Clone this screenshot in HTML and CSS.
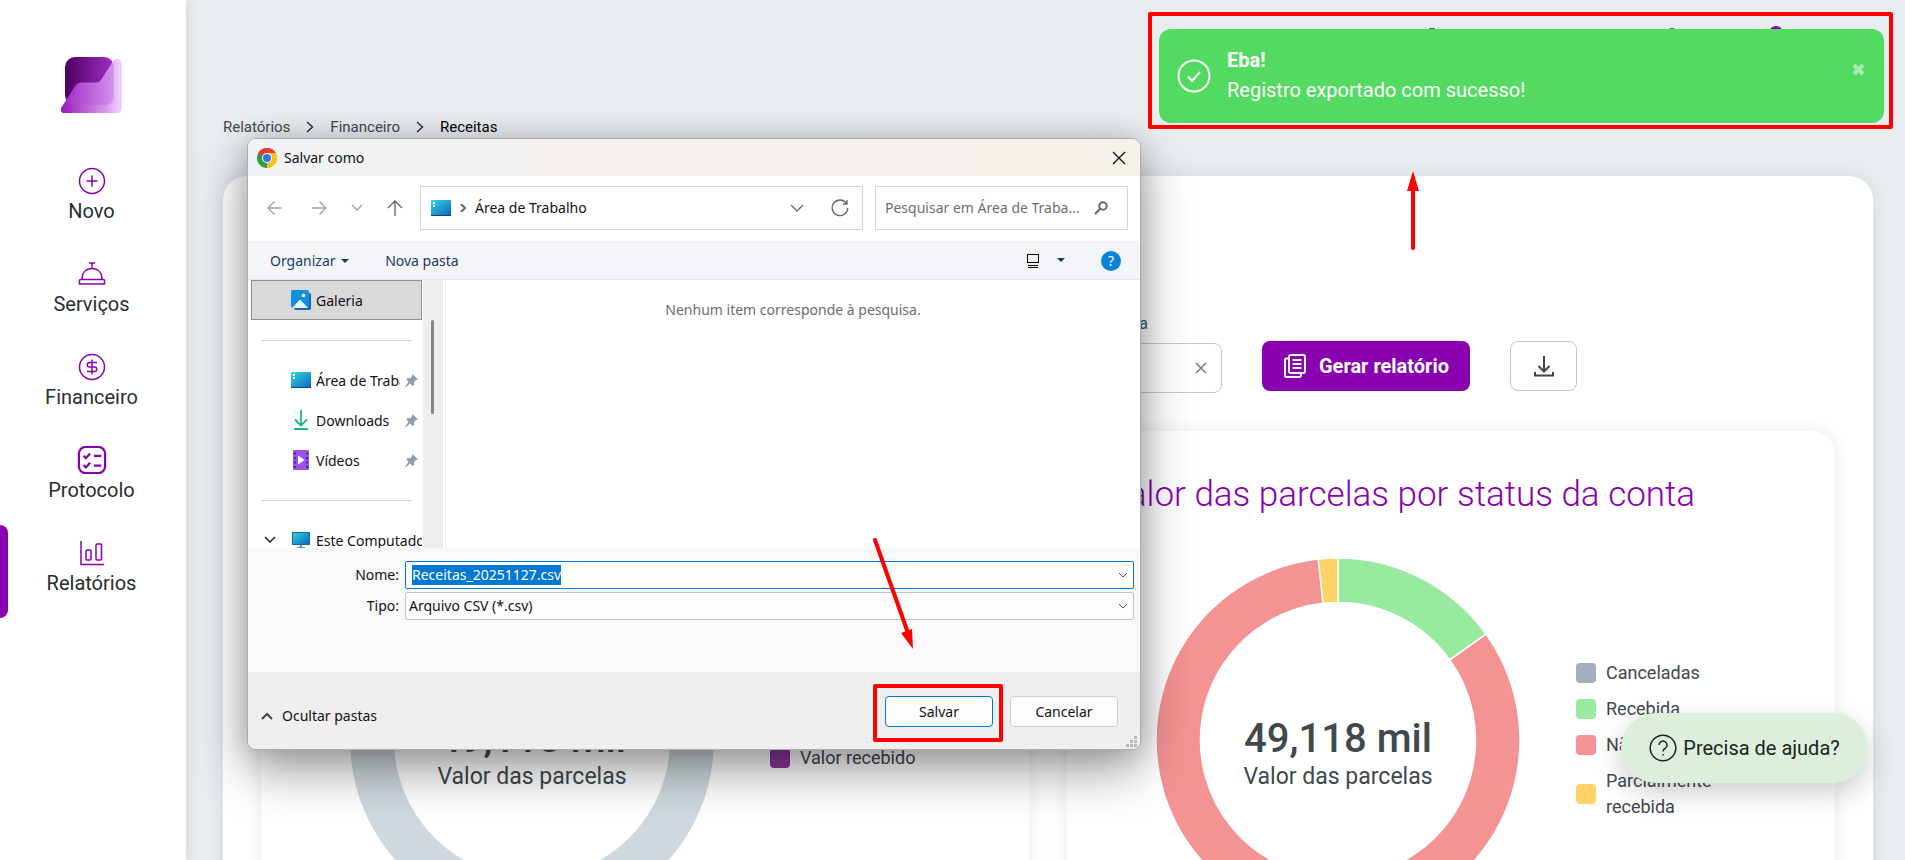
FILE: index.html
```html
<!DOCTYPE html>
<html lang="pt-BR">
<head>
  <meta charset="UTF-8">
  <meta name="viewport" content="width=device-width, initial-scale=1.0">
  <title>Relatórios - Receitas</title>
  <link rel="stylesheet" href="styles.css">
</head>
<body>
  <nav class="sidebar">
    <a href="#" class="logo" aria-label="Início">
      <svg width="62" height="58" viewBox="0 0 62 58">
        <defs>
          <linearGradient id="logoDark" x1="0" x2="1"><stop offset="0" stop-color="#4b0061"/><stop offset="1" stop-color="#a22fc4"/></linearGradient>
          <linearGradient id="logoLight" x1="0" x2="1"><stop offset="0" stop-color="#9a17bd"/><stop offset="0.75" stop-color="#d79ceb"/><stop offset="1" stop-color="#f4d6ff"/></linearGradient>
        </defs>
        <rect x="5" y="1" width="49" height="48" rx="10" fill="url(#logoDark)"/>
        <path d="M4 57Q0 57 1 52L16 29Q18 26 22 26.500H35Q39 27 41 24L52 7Q54 3 57 3Q62 3 62 9V51Q62 57 57 57Z" fill="url(#logoLight)"/>
        <path d="M7 43L16 29Q18 26 22 26.500H35Q39 27 41 24L53 6Q54 8 54 10V40Q54 49 44 49H15Q9 49 7 43Z" fill="#b04bd0" opacity="0.300"/>
      </svg>
    </a>
    <a href="#" class="menu-item">
      <svg class="menu-icon" viewBox="0 0 28 28"><circle cx="14" cy="14" r="12.500"/><path d="M14 8.500v11M8.500 14h11"/></svg>
      <span>Novo</span>
    </a>
    <a href="#" class="menu-item">
      <svg class="menu-icon" viewBox="0 0 28 28"><path d="M11 3h6M14 3v5M4 19.500C4 12 8.500 8.500 14 8.500S24 12 24 19.500M2.500 19.500h23q1 0 1 1V24h-25v-3.500q0-1 1-1z"/></svg>
      <span>Serviços</span>
    </a>
    <a href="#" class="menu-item">
      <svg class="menu-icon" viewBox="0 0 28 28"><circle cx="14" cy="14" r="12.500"/><path d="M14 6.500v15M19 9.500h-7.500a2.250 2.250 0 0 0 0 4.500h5a2.250 2.250 0 0 1 0 4.500H9"/></svg>
      <span>Financeiro</span>
    </a>
    <a href="#" class="menu-item">
      <svg class="menu-icon menu-icon-bold" viewBox="0 0 30 30"><rect x="1" y="1" width="28" height="28" rx="7"/><path d="M6 10.500l2.500 2.500L13 8M6 20.500L8.500 23l4.500-5M17 10.500h8M17 21h8"/></svg>
      <span>Protocolo</span>
    </a>
    <a href="#" class="menu-item active">
      <svg class="menu-icon" viewBox="0 0 28 28"><path d="M3 2v23.500h23"/><rect x="8" y="11" width="5" height="10" rx="1"/><rect x="18" y="5" width="5.500" height="16" rx="1"/></svg>
      <span>Relatórios</span>
    </a>
  </nav>

  <main class="main">
    <div class="breadcrumb">
      <a href="#">Relatórios</a>
      <svg width="8" height="12" viewBox="0 0 8 12"><path d="M1 1l5.500 5L1 11"/></svg>
      <a href="#">Financeiro</a>
      <svg width="8" height="12" viewBox="0 0 8 12"><path d="M1 1l5.500 5L1 11"/></svg>
      <strong>Receitas</strong>
    </div>

    <section class="panel">
      <form class="filters">
        <div class="field">
          <label for="conta">Conta bancária</label>
          <div class="field-box">
            <input type="text" id="conta">
            <button type="button" class="clear-btn" aria-label="Limpar">
              <svg width="12" height="12" viewBox="0 0 12 12"><path d="M1 1l10 10M11 1L1 11"/></svg>
            </button>
          </div>
        </div>
        <button type="button" class="btn btn-primary">
          <svg width="24" height="26" viewBox="0 0 24 26"><rect x="6" y="2" width="16" height="18" rx="2"/><path d="M6 5.500H3.500Q2 5.500 2 7v15.500Q2 24 3.500 24H16q2 0 2-2v-2M9.500 7h9M9.500 11h9M9.500 15h9"/></svg>
          Gerar relatório
        </button>
        <button type="button" class="btn btn-download" aria-label="Baixar">
          <svg width="22" height="24" viewBox="0 0 22 24"><path d="M11 2v15M5.500 12l5.500 5.500 5.500-5.500M2 18v3.500h18V18"/></svg>
        </button>
      </form>

      <div class="cards">
        <article class="card">
          <h2>Valor das parcelas</h2>
          <div class="chart-row">
            <div class="donut">
              <svg viewBox="0 0 364 364"><circle cx="182" cy="182" r="160" fill="none" stroke="#cfd8dd" stroke-width="44"/></svg>
              <div class="donut-center"><b>49,118 mil</b><span>Valor das parcelas</span></div>
            </div>
            <ul class="legend">
              <li><i class="swatch gray"></i>Valor a receber</li>
              <li><i class="swatch purple"></i>Valor recebido</li>
            </ul>
          </div>
        </article>

        <article class="card">
          <h2>Valor das parcelas por status da conta</h2>
          <div class="chart-row">
            <div class="donut">
              <svg viewBox="0 0 364 364">
                <g stroke="#fff" stroke-width="1.500">
                  <path fill="#98eaa0" d="M182 0A182 182 0 0 1 330 76.100L293.800 102A137.500 137.500 0 0 0 182 44.500Z"/>
                  <path fill="#f39393" d="M330 76.100A182 182 0 1 1 162.300 1.100L167.100 45.300A137.500 137.500 0 1 0 293.800 102Z"/>
                  <path fill="#ffd365" d="M162.300 1.100A182 182 0 0 1 182 0V44.500A137.500 137.500 0 0 0 167.100 45.300Z"/>
                </g>
              </svg>
              <div class="donut-center"><b>49,118 mil</b><span>Valor das parcelas</span></div>
            </div>
            <ul class="legend">
              <li><i class="swatch gray"></i>Canceladas</li>
              <li><i class="swatch green"></i>Recebida</li>
              <li><i class="swatch red"></i>Não recebida</li>
              <li><i class="swatch yellow"></i>Parcialmente recebida</li>
            </ul>
          </div>
        </article>
      </div>
    </section>
  </main>

  <button type="button" class="help-btn">
    <svg width="28" height="28" viewBox="0 0 28 28"><circle cx="14" cy="14" r="12.800"/><path d="M10 11a4 4 0 1 1 6 3.500q-2 1-2 3M14 20v1.500"/></svg>
    Precisa de ajuda?
  </button>

  <!-- ícones do topo, atrás do aviso -->
  <div class="top-icons"><i class="bell"></i><i></i><i class="avatar"></i></div>

  <div class="toast" role="status">
    <svg width="34" height="34" viewBox="0 0 34 34"><circle cx="17" cy="17" r="15.500"/><path d="M11 17.500l4 4.500 8-9"/></svg>
    <div class="toast-text">
      <b>Eba!</b>
      <span>Registro exportado com sucesso!</span>
    </div>
    <button type="button" class="toast-close" aria-label="Fechar">
      <svg width="15" height="15" viewBox="0 0 15 15"><path d="M3 3l9 9M12 3l-9 9"/></svg>
    </button>
  </div>

  <!-- Salvar como -->
  <div class="dialog" role="dialog" aria-labelledby="dialogTitle">
    <div class="dialog-title">
      <svg width="20" height="20" viewBox="0 0 20 20">
        <path d="M10 10L1.340 5A10 10 0 0 1 18.660 5Z" fill="#e33b2e"/>
        <path d="M10 10L18.660 5A10 10 0 0 1 10 20Z" fill="#fcc31e"/>
        <path d="M10 10V20A10 10 0 0 1 1.340 5Z" fill="#2b9f4b"/>
        <path d="M10 5h8.660A10 10 0 0 1 10 20l4.330-7.500Z" fill="#fcc31e"/>
        <path d="M1.340 5L5.670 12.500 10 10V5Z" fill="#2b9f4b"/>
        <path d="M1.340 5A10 10 0 0 1 18.660 5H10Q6 5 5.500 10Z" fill="#e33b2e"/>
        <circle cx="10" cy="10" r="5" fill="#fff"/><circle cx="10" cy="10" r="4" fill="#2a79ee"/>
      </svg>
      <span id="dialogTitle">Salvar como</span>
      <button type="button" class="icon-btn close" aria-label="Fechar">
        <svg width="14" height="14" viewBox="0 0 14 14"><path d="M1 1l12 12M13 1L1 13"/></svg>
      </button>
    </div>

    <div class="dialog-nav">
      <div class="nav-arrows">
        <button type="button" class="icon-btn muted back" aria-label="Voltar"><svg width="16" height="16" viewBox="0 0 16 16"><path d="M15 8H1M7.500 1.500L1 8l6.500 6.500"/></svg></button>
        <button type="button" class="icon-btn muted" aria-label="Avançar"><svg width="16" height="16" viewBox="0 0 16 16"><path d="M1 8h14M8.500 1.500L15 8l-6.500 6.500"/></svg></button>
        <button type="button" class="icon-btn muted" aria-label="Recentes"><svg width="12" height="16" viewBox="0 0 12 16"><path d="M1 5l5 5 5-5"/></svg></button>
        <button type="button" class="icon-btn" aria-label="Acima"><svg width="16" height="16" viewBox="0 0 16 16"><path d="M8 16V1M1 8l7-7 7 7"/></svg></button>
      </div>
      <div class="address">
        <svg width="20" height="16" viewBox="0 0 20 16"><use href="#desk"/></svg>
        <svg class="line" width="6" height="8" viewBox="0 0 6 8"><path d="M1 0l4 4-4 4" stroke-width="2"/></svg>
        <span>Área de Trabalho</span>
        <button type="button" class="icon-btn push" aria-label="Abrir"><svg width="14" height="8" viewBox="0 0 14 8"><path d="M1 1l6 6 6-6"/></svg></button>
        <button type="button" class="icon-btn" aria-label="Atualizar"><svg width="18" height="18" viewBox="0 0 18 18"><path d="M15.500 4.500A7.800 7.800 0 1 0 16.800 9M16 1v4h-4"/></svg></button>
      </div>
      <div class="search">
        <input type="text" placeholder="Pesquisar em Área de Traba..." aria-label="Pesquisar">
        <svg class="line" width="14" height="14" viewBox="0 0 14 14"><circle cx="9" cy="5" r="3.700" stroke-width="2"/><path d="M6.500 7.500L1 13" stroke-width="2"/></svg>
      </div>
    </div>

    <div class="dialog-tools">
      <button type="button">Organizar <i class="caret"></i></button>
      <button type="button">Nova pasta</button>
      <button type="button" class="view-btn" aria-label="Exibição">
        <svg width="12" height="14" viewBox="0 0 12 14" fill="none" stroke="#000"><rect x="0.500" y="0.500" width="11" height="8"/><path d="M1 11.500h10M1 13.500h10"/></svg>
        <i class="caret"></i>
      </button>
      <button type="button" class="help-circle">?</button>
    </div>

    <div class="dialog-body">
      <div class="tree">
        <div class="tree-item selected">
          <svg width="20" height="20" viewBox="0 0 20 20"><rect x="3" y="3" width="17" height="17" rx="2" fill="#1467b5"/><rect width="18" height="18" rx="2" fill="#1390dc"/><path d="M1 18L9 9.500l8 8.500Z" fill="#e4f2ff"/><circle cx="12.500" cy="5.500" r="1.800" fill="#fff"/></svg>
          <span>Galeria</span>
        </div>
        <hr>
        <div class="tree-item">
          <svg width="20" height="16" viewBox="0 0 20 16">
            <defs><linearGradient id="blueFill" x1="0" y1="0" x2="1" y2="1"><stop offset="0" stop-color="#36d5e6"/><stop offset="1" stop-color="#0a63bd"/></linearGradient></defs>
            <g id="desk"><rect width="20" height="16" rx="1" fill="url(#blueFill)"/><path d="M0 15h20v1H0z" fill="#0c4475"/><path d="M2 2h2v2H2zM2 5h2v2H2z" fill="#fff"/></g>
          </svg>
          <span>Área de Trabalho</span>
          <svg class="pin" width="13" height="13" viewBox="0 0 13 13"><use href="#pin"/></svg>
        </div>
        <div class="tree-item">
          <svg width="20" height="20" viewBox="0 0 20 20" fill="none" stroke="#1db58f" stroke-width="1.800"><path d="M10 0v15M4 9.500l6 6 6-6M3 19h14"/></svg>
          <span>Downloads</span>
          <svg class="pin" width="13" height="13" viewBox="0 0 13 13"><use href="#pin"/></svg>
        </div>
        <div class="tree-item">
          <svg width="20" height="20" viewBox="0 0 20 20"><rect x="2" width="16" height="20" rx="1" fill="#9a55e8"/><path d="M7 5.500l6.500 4.500L7 14.500Z" fill="#fff"/><path d="M4 2.500v16M16 2.500v16" stroke="#4d2390" stroke-width="2" stroke-dasharray="2 2.500"/></svg>
          <span>Vídeos</span>
          <svg class="pin" width="13" height="13" viewBox="0 0 13 13"><path id="pin" d="M7.500 0L13 5.500 11 6l-2 2 .200 3L7.500 12 5 9.500 1 13l-1-.500L3.500 8 1.500 5.500 2.500 4l3 .200L7 2Z" fill="#929ca3"/></svg>
        </div>
        <hr>
        <div class="tree-item">
          <svg class="expander" width="12" height="8" viewBox="0 0 12 8"><path d="M1 1l5 5 5-5"/></svg>
          <svg width="20" height="18" viewBox="0 0 20 18"><rect x="1.500" y="1.500" width="17" height="12" fill="url(#blueFill)" stroke="#126b9c"/><path d="M10 14v3M6 17h8" stroke="#5d6b75" stroke-width="1.500"/></svg>
          <span>Este Computador</span>
        </div>
      </div>
      <div class="scrollbar"><div class="thumb"></div></div>
      <div class="files">Nenhum item corresponde à pesquisa.</div>
    </div>

    <div class="dialog-fields">
      <label for="fileName">Nome:</label>
      <div class="combo combo-name">
        <input type="text" id="fileName" value="Receitas_20251127.csv" autofocus>
        <svg width="10" height="6" viewBox="0 0 10 6"><path d="M1 1l4 4 4-4"/></svg>
      </div>
      <label for="fileType">Tipo:</label>
      <div class="combo">
        <select id="fileType"><option>Arquivo CSV (*.csv)</option></select>
        <svg width="10" height="6" viewBox="0 0 10 6"><path d="M1 1l4 4 4-4"/></svg>
      </div>
    </div>

    <div class="dialog-footer">
      <button type="button" class="hide-folders">
        <svg width="12" height="8" viewBox="0 0 12 8"><path d="M1 7l5-5 5 5"/></svg>
        Ocultar pastas
      </button>
      <button type="button" class="win-btn default">Salvar</button>
      <button type="button" class="win-btn">Cancelar</button>
      <svg class="grip" width="11" height="11" viewBox="0 0 11 11"><path d="M8 0h3v3H8zM4 4h3v3H4zM8 4h3v3H8zM0 8h3v3H0zM4 8h3v3H4zM8 8h3v3H8z" fill="#b9b9b9"/></svg>
    </div>
  </div>

  <!-- marcações do tutorial -->
  <div class="mark mark-toast"></div>
  <div class="mark mark-save"></div>
  <svg class="arrow arrow-toast" width="16" height="80" viewBox="0 0 16 80"><path d="M8 77V20" stroke="#f00" stroke-width="4" stroke-linecap="round"/><path d="M8 0l6 20H2Z" fill="#f00"/></svg>
  <svg class="arrow arrow-save" width="46" height="114" viewBox="0 0 46 114"><path d="M3 3L36 96" stroke="#f00" stroke-width="4" stroke-linecap="round"/><path d="M41 112L29 96l11-4Z" fill="#f00"/></svg>

  <script>
    document.getElementById('fileName').focus();
    document.getElementById('fileName').select();
  </script>
</body>
</html>
```
FILE: styles.css
```css
:root {
  --primary: #8800b0;
  --bg-color: #e9edf0;
  --text: #3f484d;
  --red: #ff0000;
  --win-blue: #0078d4;
}
* {
  box-sizing: border-box;
}
body {
  font-family: Roboto, sans-serif;
  background: var(--bg-color);
  color: var(--text);
  margin: 0;
  height: 100vh;
  overflow: hidden;
  display: flex;
  position: relative;
}
button, input, select {
  font: inherit;
  color: inherit;
}
button {
  background: none;
  border: none;
  padding: 0;
  cursor: pointer;
}
a {
  color: inherit;
  text-decoration: none;
}
svg {
  flex: none;
}

/* menu lateral */
.sidebar {
  width: 186px;
  flex: none;
  background: #fff;
  box-shadow: 0 0 16px rgba(0, 0, 0, 0.12);
  padding-top: 56px;
}
.logo {
  display: flex;
  justify-content: center;
  height: 97px;
  padding-right: 4px;
}
.menu-item {
  height: 93px;
  padding: 14px 3px 0 0;
  display: flex;
  flex-direction: column;
  align-items: center;
  font-size: 20px;
  line-height: 32px;
  color: #2a2d30;
  position: relative;
}
.menu-icon {
  width: 28px;
  height: 28px;
  fill: none;
  stroke: var(--primary);
  stroke-width: 1.5;
}
.menu-icon-bold {
  width: 30px;
  stroke-width: 2.4;
}
.menu-item.active::before {
  content: "";
  position: absolute;
  left: 0;
  top: 0;
  width: 8px;
  height: 93px;
  background: var(--primary);
  border-radius: 0 8px 8px 0;
}

/* conteúdo */
.main {
  flex: 1;
  min-width: 0;
  padding: 116px 32px 0 37px;
}
.breadcrumb {
  display: flex;
  align-items: center;
  gap: 16px;
  font-size: 15px;
  line-height: 22px;
}
.breadcrumb svg {
  fill: none;
  stroke: #333;
  stroke-width: 1.5;
}
.breadcrumb strong {
  font-weight: 400;
  color: #000;
}
.panel {
  margin-top: 38px;
  background: #fff;
  border-radius: 24px;
  padding: 137px 38px 38px;
  box-shadow: 0 0 24px rgba(0, 0, 0, 0.08);
}
.filters {
  display: flex;
  justify-content: flex-end;
  align-items: flex-end;
  gap: 40px;
  padding-right: 258px;
}
.field {
  width: 182px;
  font-size: 16px;
  color: #3c5a78;
}
.field label {
  display: block;
  line-height: 22px;
  margin-bottom: 8px;
}
.field-box {
  height: 50px;
  border: 1px solid #c0c8d0;
  border-radius: 8px;
  display: flex;
  align-items: center;
  padding-right: 14px;
}
.field-box input {
  flex: 1;
  min-width: 0;
  border: none;
  outline: none;
  background: none;
}
.clear-btn svg {
  display: block;
  fill: none;
  stroke: #6b7a89;
  stroke-width: 1.5;
}
.btn {
  height: 50px;
  margin-bottom: 2px;
  border-radius: 8px;
  display: flex;
  align-items: center;
  justify-content: center;
  gap: 12px;
}
.btn svg {
  fill: none;
  stroke: currentColor;
  stroke-width: 2;
}
.btn-primary {
  width: 208px;
  background: var(--primary);
  color: #fff;
  font-size: 20px;
  font-weight: 700;
}
.btn-download {
  width: 67px;
  border: 1px solid #c0c8d0;
}
.cards {
  display: grid;
  grid-template-columns: 1fr 1fr;
  gap: 38px;
  margin-top: 38px;
}
.card {
  border-radius: 24px;
  background: #fff;
  padding: 40px;
  box-shadow: 0 0 16px rgba(0, 0, 0, 0.09);
}
.card h2 {
  margin: 0 0 39px;
  font-size: 35px;
  font-weight: 300;
  line-height: 48px;
  color: var(--primary);
}
.chart-row {
  display: flex;
  align-items: center;
  gap: 56px;
  padding-left: 49px;
}
.donut {
  width: 364px;
  flex: none;
  display: grid;
}
.donut svg {
  overflow: visible;
}
.donut > * {
  grid-area: 1 / 1;
}
.donut-center {
  display: flex;
  flex-direction: column;
  justify-content: center;
  align-items: center;
  padding-top: 28px;
  font-size: 23px;
  line-height: 30px;
}
.donut-center b {
  font-size: 40px;
  font-weight: 500;
  line-height: 46px;
}
.legend {
  list-style: none;
  margin: 0;
  padding: 0;
  max-width: 160px;
  display: grid;
  gap: 10px;
  font-size: 18px;
  line-height: 26px;
}
.legend li {
  display: flex;
  align-items: center;
  gap: 10px;
}
.swatch {
  width: 20px;
  height: 20px;
  flex: none;
  border-radius: 4px;
}
.gray { background: #a3afbb; }
.purple { background: #8a3a9c; }
.green { background: #98eaa0; }
.red { background: #f39393; }
.yellow { background: #ffd365; }

.help-btn {
  position: absolute;
  right: 37px;
  bottom: 77px;
  width: 247px;
  height: 70px;
  border-radius: 35px;
  background: #dbefdc;
  color: #222;
  font-size: 20px;
  display: flex;
  align-items: center;
  justify-content: center;
  gap: 6px;
  box-shadow: 0 10px 28px rgba(0, 0, 0, 0.2);
}
.help-btn svg {
  fill: none;
  stroke: #222;
  stroke-width: 1.5;
}

/* aviso */
.top-icons {
  position: absolute;
  top: 26px;
  right: 122px;
  display: flex;
  gap: 90px;
}
.top-icons i {
  width: 14px;
  height: 14px;
  margin-top: 2px;
  border-radius: 7px;
  background: #3f6d99;
}
.top-icons .bell {
  width: 6px;
  margin-right: 140px;
  border-radius: 0;
}
.top-icons .avatar {
  margin-top: 0;
  background: var(--primary);
}
.toast {
  position: absolute;
  top: 29px;
  right: 21px;
  width: 725px;
  height: 94px;
  border-radius: 12px;
  background: #53da61;
  color: #fff;
  display: flex;
  align-items: center;
  gap: 16px;
  padding: 0 18px;
}
.toast svg {
  fill: none;
  stroke: #fff;
  stroke-width: 2;
}
.toast-text {
  display: flex;
  flex-direction: column;
  flex: 1;
  padding-bottom: 3px;
  font-size: 20px;
  line-height: 30px;
}
.toast-close {
  padding-bottom: 10px;
  opacity: 0.5;
}
.toast .toast-close svg {
  stroke-width: 4;
}

/* janela Salvar como */
.dialog {
  position: absolute;
  left: 247px;
  top: 138px;
  width: 894px;
  background: #fff;
  border: 1px solid #a9abad;
  border-radius: 9px;
  overflow: hidden;
  box-shadow: 0 20px 50px rgba(0, 0, 0, 0.4), 0 0 24px rgba(0, 0, 0, 0.14);
  font-family: "Noto Sans", "Open Sans", sans-serif;
  font-size: 14px;
  line-height: 20px;
  color: #111;
}
.icon-btn {
  display: flex;
}
.icon-btn svg, .line {
  fill: none;
  stroke: #666;
  stroke-width: 1.3;
}
.icon-btn.muted svg {
  stroke: #a0a0a0;
}
.icon-btn.close svg {
  stroke: #111;
}
.dialog-title {
  height: 37px;
  padding: 0 14px 0 9px;
  display: flex;
  align-items: center;
  gap: 7px;
  background: linear-gradient(90deg, #f1f3f5, #f6f2ee 45%, #f7f1eb);
}
.icon-btn.close {
  margin-left: auto;
}
.dialog-nav {
  height: 65px;
  padding: 0 12px 2px 19px;
  display: flex;
  align-items: center;
  gap: 12px;
}
.nav-arrows {
  display: flex;
  gap: 24px;
  width: 141px;
}
.nav-arrows .back {
  margin-right: 4px;
}
.address, .search {
  height: 44px;
  border: 1px solid #d5d6d8;
  display: flex;
  align-items: center;
}
.address {
  flex: 1;
  padding: 0 13px 0 10px;
  gap: 9px;
}
.address .push {
  margin: 0 18px 0 auto;
}
.search {
  width: 253px;
  padding: 0 19px 0 9px;
}
.search input {
  flex: 1;
  min-width: 0;
  border: none;
  outline: none;
  padding: 0;
}
.search input::placeholder {
  color: #6f6f6f;
  opacity: 1;
}
.dialog-tools {
  height: 39px;
  padding: 1px 19px 0 22px;
  display: flex;
  align-items: center;
  gap: 36px;
  background: #f4f5f8;
  border-bottom: 1px solid #e4e6e9;
  color: #1d3c66;
}
.caret {
  display: inline-block;
  border: 4px solid transparent;
  border-top-color: #1b365f;
  border-bottom: none;
  vertical-align: middle;
  margin: 0 0 2px 2px;
}
.view-btn {
  display: flex;
  align-items: center;
  gap: 16px;
  margin-left: auto;
}
.help-circle {
  width: 20px;
  height: 20px;
  border-radius: 50%;
  background: #0a84d8;
  color: #fff;
}
.dialog-body {
  height: 268px;
  display: flex;
  overflow: hidden;
}
.tree {
  width: 175px;
  padding-left: 3px;
  flex: none;
}
.tree hr {
  border: none;
  border-top: 1px solid #d0d0d0;
  margin: 20px 11px 19px 10px;
}
.tree-item {
  height: 40px;
  width: 171px;
  padding: 0 4px 0 40px;
  display: flex;
  align-items: center;
  gap: 5px;
  position: relative;
}
.tree-item.selected {
  background: #d9d9d9;
  border: 1px solid #8f8f8f;
  padding-left: 39px;
}
.tree-item span {
  flex: 1;
  padding-top: 2px;
  overflow: hidden;
  white-space: nowrap;
}
.tree-item:last-child {
  padding-right: 0;
}
.expander {
  position: absolute;
  left: 13px;
  fill: none;
  stroke: #222;
  stroke-width: 1.5;
}
.scrollbar {
  width: 20px;
  background: #eee;
  padding: 40px 0 0 8px;
}
.thumb {
  width: 3px;
  height: 94px;
  border-radius: 2px;
  background: #858585;
}
.files {
  flex: 1;
  margin-left: 2px;
  border-left: 1px solid #eee;
  padding-top: 20px;
  text-align: center;
  color: #6d6d6d;
}
.dialog-fields {
  height: 124px;
  padding: 13px 6px 0 0;
  display: grid;
  grid-template-columns: 151px 1fr;
  column-gap: 6px;
  row-gap: 3px;
  align-content: start;
  align-items: center;
  background: #f9f9f9;
}
.dialog-fields label {
  text-align: right;
}
.combo {
  height: 28px;
  display: flex;
  align-items: center;
  background: #fdfdfd;
  border: 1px solid #c4c4c4;
  border-radius: 2px;
  padding: 0 5px 0 3px;
}
.combo-name {
  border-color: var(--win-blue);
  background: #fff;
  padding-left: 6px;
}
.combo input, .combo select {
  flex: 1;
  height: 20px;
  line-height: 20px;
  padding: 0;
  border: none;
  outline: none;
  background: none;
  appearance: none;
}
.combo input::selection {
  background: var(--win-blue);
  color: #fff;
}
.combo svg {
  fill: none;
  stroke: #555;
}
.dialog-footer {
  height: 77px;
  padding: 2px 22px 0 13px;
  display: flex;
  align-items: center;
  gap: 17px;
  background: #efefef;
  position: relative;
}
.hide-folders {
  display: flex;
  align-items: center;
  gap: 9px;
  margin-right: auto;
  padding-top: 8px;
}
.hide-folders svg {
  fill: none;
  stroke: #444;
  stroke-width: 2;
}
.win-btn {
  width: 108px;
  height: 31px;
  background: #fdfdfd;
  border: 1px solid #d0d0d0;
  border-radius: 4px;
}
.win-btn.default {
  border-color: var(--win-blue);
}
.grip {
  position: absolute;
  right: 3px;
  bottom: 2px;
}

/* marcações */
.mark {
  position: absolute;
  border: 4px solid var(--red);
  border-radius: 2px;
}
.mark-toast {
  top: 12px;
  right: 12px;
  width: 745px;
  height: 117px;
}
.mark-save {
  left: 873px;
  top: 684px;
  width: 130px;
  height: 58px;
}
.arrow {
  position: absolute;
}
.arrow-toast {
  left: 1405px;
  top: 171px;
}
.arrow-save {
  left: 872px;
  top: 537px;
}
```
